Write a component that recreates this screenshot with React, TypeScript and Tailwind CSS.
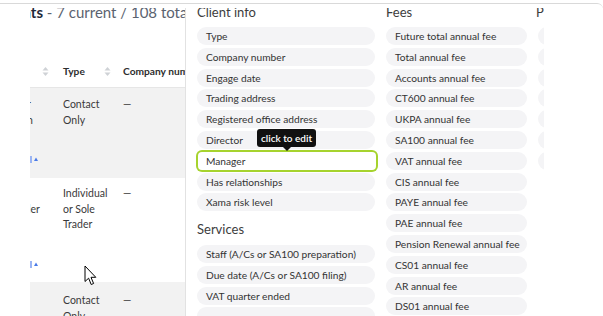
import React from "react";

const Pill = ({ t }: { t?: string }) => (
  <div className="h-[18px] shrink-0 rounded-full bg-[#f4f4f6] pl-[9px] text-[10.2px] leading-[18px] text-[#333333] whitespace-nowrap overflow-hidden">
    {t}
  </div>
);

const HPill = ({ t }: { t: string }) => (
  <div className="ml-[1px] w-[178px] h-[18px] shrink-0 rounded-[4px] bg-white ring-2 ring-[#a6d32e] pl-[8px] text-[10.2px] leading-[18px] text-[#333333] whitespace-nowrap overflow-hidden">
    {t}
  </div>
);

const SortIcon = () => (
  <svg width="7" height="11" viewBox="0 0 7 11">
    <path d="M0.5 4.5 L3.5 1 L6.5 4.5 Z" fill="#cfd2d6" />
    <path d="M0.5 6.5 L3.5 10 L6.5 6.5 Z" fill="#cfd2d6" />
  </svg>
);

const BlueMark = () => (
  <div className="flex items-center gap-[2px] h-[8px]">
    <div className="w-[2px] h-[7px] bg-[#9bb5f3]" />
    <svg width="4" height="4" viewBox="0 0 4 4">
      <path d="M0 4 L2 0.5 L4 4 Z" fill="#4a7be8" />
    </svg>
  </div>
);

const clientInfo = [
  "Type",
  "Company number",
  "Engage date",
  "Trading address",
  "Registered office address",
  "Director",
];
const clientInfo2 = ["Has relationships", "Xama risk level"];
const services = [
  "Staff (A/Cs or SA100 preparation)",
  "Due date (A/Cs or SA100 filing)",
  "VAT quarter ended",
];
const fees = [
  "Future total annual fee",
  "Total annual fee",
  "Accounts annual fee",
  "CT600 annual fee",
  "UKPA annual fee",
  "SA100 annual fee",
  "VAT annual fee",
  "CIS annual fee",
  "PAYE annual fee",
  "PAE annual fee",
  "Pension Renewal annual fee",
  "CS01 annual fee",
  "AR annual fee",
  "DS01 annual fee",
];

export default function App() {
  return (
    <div className="relative w-[603px] h-[316px] overflow-hidden bg-white [font-family:Lato,'Noto_Sans',sans-serif]">
      <div className="pt-[3px]">
        <div className="border-t border-[#d9d9d9] rounded-tr-[6px] pt-[4px]">
          <div className="flex h-[309px] overflow-hidden">
            {/* blank gutter */}
            <div className="w-[30px] shrink-0" />
            {/* table */}
            <div className="w-[155px] shrink-0 overflow-hidden flex flex-col">
              <div className="h-[48px] shrink-0 whitespace-nowrap -ml-[33px] text-[15px] leading-[8px]">
                <span className="font-bold text-[#1f2a3a]">Clients</span>
                <span className="text-[#5b6370]"> - 7 current / 108 total</span>
              </div>
              <div className="h-[32px] shrink-0 flex items-center border-b border-[#e6e6e6] text-[10.2px] font-bold text-[#2d2d2d] whitespace-nowrap">
                <div className="w-[33px] shrink-0 pl-[12px]">
                  <SortIcon />
                </div>
                <div className="w-[60px] shrink-0 flex items-center">
                  <span className="w-[41px]">Type</span>
                  <SortIcon />
                </div>
                <div>Company number</div>
              </div>
              {/* row 1 */}
              <div className="h-[90px] shrink-0 bg-[#f2f2f2] flex pt-[9px] text-[10.5px] leading-[15.5px] text-[#3a3a3a]">
                <div className="w-[33px] shrink-0 flex flex-col">
                  <span className="-ml-[3px]">r</span>
                  <span className="-ml-[3px]">n</span>
                  <div className="mt-[27px]">
                    <BlueMark />
                  </div>
                </div>
                <div className="w-[60px] shrink-0">
                  Contact
                  <br />
                  Only
                </div>
                <div>—</div>
              </div>
              {/* row 2 */}
              <div className="h-[104px] shrink-0 bg-white flex pt-[8px] text-[10.5px] leading-[15.5px] text-[#3a3a3a]">
                <div className="w-[33px] shrink-0 flex flex-col">
                  <span>&nbsp;</span>
                  <span className="-ml-[2px]">ler</span>
                  <div className="mt-[43px]">
                    <BlueMark />
                  </div>
                </div>
                <div className="w-[60px] shrink-0">
                  Individual
                  <br />
                  or Sole
                  <br />
                  Trader
                </div>
                <div>—</div>
              </div>
              {/* row 3 */}
              <div className="flex-1 bg-[#f2f2f2] flex pt-[11px] text-[10.5px] leading-[15.5px] text-[#3a3a3a]">
                <div className="w-[33px] shrink-0" />
                <div className="w-[60px] shrink-0">
                  Contact
                  <br />
                  Only
                </div>
                <div>—</div>
              </div>
            </div>
            {/* panel */}
            <div className="flex-1 border-l border-[#e2e2e2] bg-white">
              <div className="w-[358px] h-full overflow-hidden flex gap-[11px] pl-[11px]">
                {/* Client info */}
                <div className="w-[178px] shrink-0 flex flex-col">
                  <div className="h-[19px] shrink-0 text-[13px] leading-[9px] text-[#3d3d3d] whitespace-nowrap">
                    Client info
                  </div>
                  <div className="flex flex-col gap-[2.8px]">
                    {clientInfo.map((t) => (
                      <Pill key={t} t={t} />
                    ))}
                    <HPill t="Manager" />
                    {clientInfo2.map((t) => (
                      <Pill key={t} t={t} />
                    ))}
                  </div>
                  <div className="h-[33.6px] shrink-0 text-[13px] leading-[37px] text-[#3d3d3d] whitespace-nowrap">
                    Services
                  </div>
                  <div className="flex flex-col gap-[2.8px]">
                    {services.map((t) => (
                      <Pill key={t} t={t} />
                    ))}
                    <Pill />
                  </div>
                </div>
                {/* Fees */}
                <div className="w-[141px] shrink-0 flex flex-col">
                  <div className="h-[19px] shrink-0 text-[13px] leading-[9px] text-[#3d3d3d] whitespace-nowrap">
                    Fees
                  </div>
                  <div className="flex flex-col gap-[2.8px]">
                    {fees.map((t) => (
                      <Pill key={t} t={t} />
                    ))}
                  </div>
                </div>
                {/* Practice */}
                <div className="w-[141px] shrink-0 flex flex-col">
                  <div className="h-[19px] shrink-0 text-[13px] leading-[9px] text-[#3d3d3d] whitespace-nowrap -ml-[2px]">
                    Practice
                  </div>
                  <div className="flex flex-col gap-[2.8px]">
                    {["Partner", "Office", "Source", "Sector", "Status", "Tags", "Notes"].map((t) => (
                      <Pill key={t} t={t} />
                    ))}
                  </div>
                </div>
              </div>
            </div>
          </div>
        </div>
      </div>

      {/* tooltip */}
      <div className="absolute left-[257px] top-[129px] flex flex-col items-center">
        <div className="h-[18px] w-[59px] rounded-[3px] bg-[#111111] text-white text-[10px] font-semibold leading-[18px] text-center whitespace-nowrap">
          click to edit
        </div>
        <div className="w-0 h-0 border-l-[4px] border-r-[4px] border-t-[4px] border-l-transparent border-r-transparent border-t-[#111111]" />
      </div>

      {/* cursor */}
      <svg className="absolute left-[84px] top-[265px]" width="13" height="21" viewBox="0 0 13 21">
        <path
          d="M1 1 L1 16.5 L4.6 13.2 L7.2 19.5 L9.6 18.5 L7 12.3 L11.8 12.3 Z"
          fill="white"
          stroke="black"
          strokeWidth="1"
          strokeLinejoin="round"
        />
      </svg>
    </div>
  );
}
